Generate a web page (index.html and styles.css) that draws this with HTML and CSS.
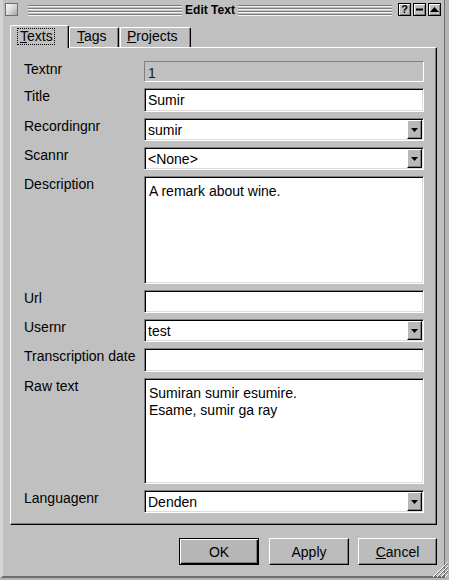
FILE: index.html
```html
<!DOCTYPE html>
<html>
<head>
<meta charset="utf-8">
<title>Edit Text</title>
<link rel="stylesheet" href="styles.css">
</head>
<body>
<div class="window">
  <div class="titlebar">
    <span class="tb-close"></span>
    <span class="tb-lines"></span>
    <span class="tb-title">Edit Text</span>
    <span class="tb-lines"></span>
    <div class="tb-btns">
      <span class="tb-btn tb-help">?</span>
      <span class="tb-btn"><svg width="7" height="3" viewBox="0 0 7 3"><rect x="0" y="0.5" width="7" height="2" fill="#000"/></svg></span>
      <span class="tb-btn"><svg width="9" height="5" viewBox="0 0 9 5"><polygon points="0,5 9,5 4.5,0" fill="#000"/></svg></span>
    </div>
  </div>
  <div class="content">
    <div class="tabs">
      <div class="tab sel tab-texts"><span class="focus"><u>T</u>exts</span></div>
      <div class="tab tab-tags"><u>T</u>ags</div>
      <div class="tab tab-projects"><u>P</u>rojects</div>
    </div>
    <div class="frame">
      <div class="form">
        <div class="label">Textnr</div>
        <div class="field disabled">1</div>

        <div class="label">Title</div>
        <div class="field">Sumir</div>

        <div class="label">Recordingnr</div>
        <div class="field combo"><span class="val">sumir</span><span class="combo-btn"><svg width="7" height="4" viewBox="0 0 7 4"><polygon points="0,0 7,0 3.5,4" fill="#000"/></svg></span></div>

        <div class="label">Scannr</div>
        <div class="field combo"><span class="val">&lt;None&gt;</span><span class="combo-btn"><svg width="7" height="4" viewBox="0 0 7 4"><polygon points="0,0 7,0 3.5,4" fill="#000"/></svg></span></div>

        <div class="label">Description</div>
        <div class="field area">A remark about wine.</div>

        <div class="label">Url</div>
        <div class="field"></div>

        <div class="label">Usernr</div>
        <div class="field combo"><span class="val">test</span><span class="combo-btn"><svg width="7" height="4" viewBox="0 0 7 4"><polygon points="0,0 7,0 3.5,4" fill="#000"/></svg></span></div>

        <div class="label">Transcription date</div>
        <div class="field"></div>

        <div class="label">Raw text</div>
        <div class="field area">Sumiran sumir esumire.<br>Esame, sumir ga ray</div>

        <div class="label">Languagenr</div>
        <div class="field combo"><span class="val">Denden</span><span class="combo-btn"><svg width="7" height="4" viewBox="0 0 7 4"><polygon points="0,0 7,0 3.5,4" fill="#000"/></svg></span></div>
      </div>
    </div>
    <div class="buttons">
      <div class="btn default">OK</div>
      <div class="btn apply">Apply</div>
      <div class="btn cancel"><u>C</u>ancel</div>
    </div>
  </div>
  <svg class="grip" width="16" height="16" viewBox="0 0 16 16">
    <g stroke-width="1" shape-rendering="crispEdges">
      <line x1="1" y1="16" x2="16" y2="1" stroke="#ffffff"/>
      <line x1="2" y1="16" x2="16" y2="2" stroke="#6a6a6a"/>
      <line x1="5" y1="16" x2="16" y2="5" stroke="#ffffff"/>
      <line x1="6" y1="16" x2="16" y2="6" stroke="#6a6a6a"/>
      <line x1="9" y1="16" x2="16" y2="9" stroke="#ffffff"/>
      <line x1="10" y1="16" x2="16" y2="10" stroke="#6a6a6a"/>
      <line x1="13" y1="16" x2="16" y2="13" stroke="#ffffff"/>
    </g>
  </svg>
</div>
</body>
</html>
```

FILE: styles.css
```css
* { box-sizing: border-box; }

html, body {
  margin: 0;
  padding: 0;
}

body {
  width: 449px;
  height: 580px;
  overflow: hidden;
  background: #b4b4b4;
  font-family: "Liberation Sans", Arial, sans-serif;
  font-size: 14px;
  color: #000;
}

.window {
  position: relative;
  width: 445px;
  height: 578px;
  background: #c0c0c0;
  border-left: 3px solid #d4d4d4;
  border-right: 1px solid #707070;
  border-bottom: 2px solid #6c6c6c;
}

/* ---------- title bar ---------- */
.titlebar {
  display: flex;
  align-items: center;
  height: 19px;
  padding: 0 3px 0 2px;
}

.tb-close {
  width: 13px;
  height: 13px;
  border: 1px solid #6f6f6f;
  background: linear-gradient(135deg, #fcfcfc 0%, #d8d8d8 50%, #a4a4a4 100%);
  margin-right: 10px;
}

.tb-lines {
  flex: 1;
  height: 12px;
  background: repeating-linear-gradient(to bottom, #c0c0c0 0 1px, #7c7c7c 1px 2px, #f2f2f2 2px 3px);
}

.tb-title {
  font-weight: bold;
  font-size: 12px;
  line-height: 14px;
  margin: 0 3px;
}

.tb-btns {
  display: flex;
  gap: 2px;
  margin-left: 6px;
}

.tb-btn {
  width: 13px;
  height: 13px;
  border: 1px solid #000;
  background: #c0c0c0;
  box-shadow: inset 1px 1px #fff, inset -1px -1px #808080;
  display: flex;
  align-items: center;
  justify-content: center;
}

.tb-help {
  font-weight: bold;
  font-size: 11px;
  line-height: 11px;
}

/* ---------- content ---------- */
.content {
  padding: 6px 7px 0 7px;
}

.tabs {
  display: flex;
  align-items: flex-end;
  height: 22px;
}

.tab {
  height: 20px;
  line-height: 16px;
  border-top: 1px solid #fff;
  border-left: 1px solid #fff;
  border-right: 1px solid #000;
  border-radius: 2px 2px 0 0;
  box-shadow: inset -1px 0 #808080;
  background: #c0c0c0;
  white-space: nowrap;
}

.tab.sel {
  height: 23px;
  margin-bottom: -1px;
  padding-top: 2px;
  position: relative;
  z-index: 1;
}

.tab-texts { width: 59px; padding-left: 9px; }
.tab-tags { width: 50px; padding-left: 7px; }
.tab-projects { width: 71px; padding-left: 6px; margin-left: 1px; }

.focus {
  display: inline-block;
  line-height: 15px;
  border: 1px dotted #000;
  padding: 0 1px 0 2px;
  margin-left: -3px;
}

.frame {
  width: 427px;
  border-top: 1px solid #fff;
  border-left: 1px solid #fff;
  border-right: 1px solid #000;
  border-bottom: 1px solid #000;
  box-shadow: inset -1px -1px #808080;
  padding: 13px 12px 11px 13px;
}

.form {
  display: grid;
  grid-template-columns: 120px 280px;
  grid-template-rows: 21px 24px 23px 23px 108px 23px 23px 24px 106px 23px;
  row-gap: 6px;
}

.label {
  padding-top: 0;
  line-height: 16px;
  white-space: nowrap;
}

.field {
  background: #fff;
  border: 1px solid;
  border-color: #808080 #fff #fff #808080;
  box-shadow: inset 1px 1px #000, inset -1px -1px #dcdcdc;
  padding: 0 3px;
  display: flex;
  align-items: center;
  line-height: 16px;
  white-space: nowrap;
}

.field.disabled {
  background: #c0c0c0;
  box-shadow: none;
  color: #1a1a1a;
  padding-top: 2px;
}

.field.combo {
  padding-right: 1px;
}

.val {
  flex: 1;
}

.combo-btn {
  width: 15px;
  height: 19px;
  background: #b8b8b8;
  border: 1px solid;
  border-color: #fff #000 #000 #fff;
  box-shadow: inset -1px -1px #808080;
  display: flex;
  align-items: center;
  justify-content: center;
}

.field.area {
  display: block;
  padding: 6px 4px;
  line-height: 17px;
  white-space: normal;
}

/* ---------- buttons ---------- */
.buttons {
  display: flex;
  justify-content: flex-end;
  width: 427px;
  margin-top: 13px;
}

.btn {
  height: 27px;
  background: #bcbcbc;
  border: 1px solid;
  border-color: #fff #000 #000 #fff;
  box-shadow: inset -1px -1px #808080;
  display: flex;
  align-items: center;
  justify-content: center;
  line-height: 16px;
}

.btn.default {
  width: 80px;
  border-color: #000;
  background: #b6b6b6;
  box-shadow: inset 1px 1px #fff, inset -1px -1px #000, inset -2px -2px #808080;
}

.btn.apply {
  width: 80px;
  margin-left: 10px;
}

.btn.cancel {
  width: 79px;
  margin-left: 9px;
}

.grip {
  position: absolute;
  right: -4px;
  bottom: -1px;
}
```
